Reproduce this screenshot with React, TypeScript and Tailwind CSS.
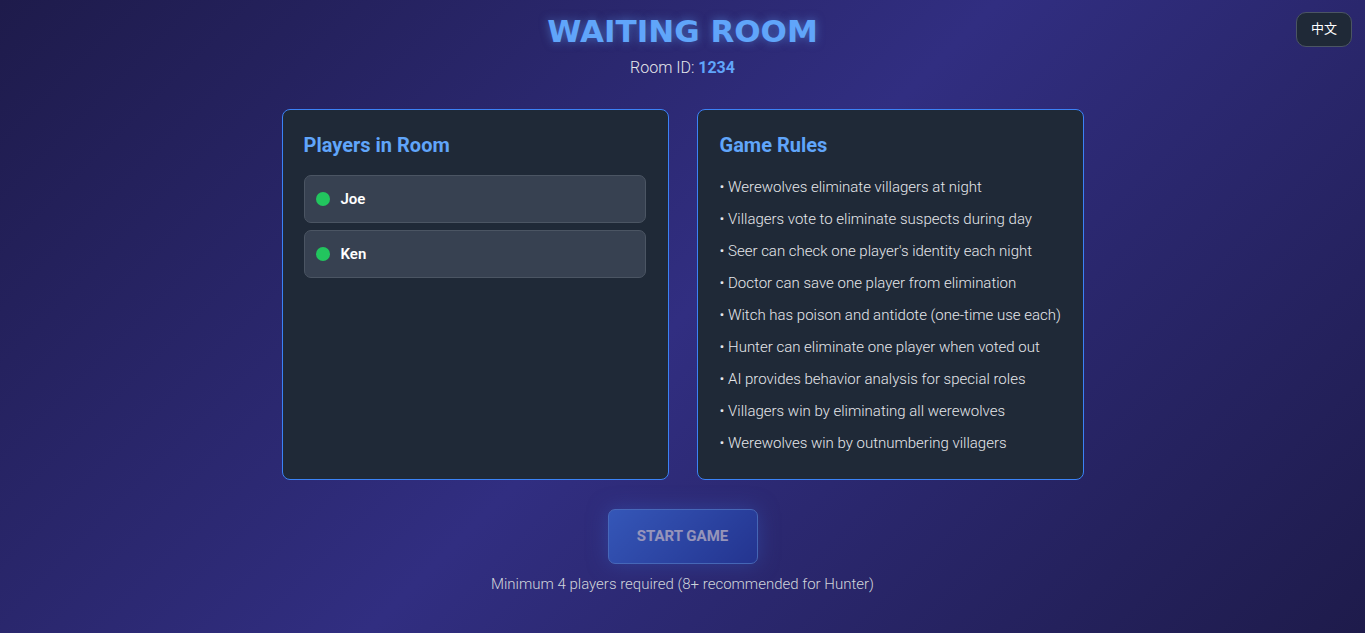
const players = ["Joe", "Ken"];

const rules = [
  "Werewolves eliminate villagers at night",
  "Villagers vote to eliminate suspects during day",
  "Seer can check one player's identity each night",
  "Doctor can save one player from elimination",
  "Witch has poison and antidote (one-time use each)",
  "Hunter can eliminate one player when voted out",
  "AI provides behavior analysis for special roles",
  "Villagers win by eliminating all werewolves",
  "Werewolves win by outnumbering villagers",
];

function PlayerRow({ name }: { name: string }) {
  return (
    <li className="flex h-12 items-center gap-[11px] rounded-[7px] border border-[#4b5563] bg-[#374151] px-[11px]">
      <span className="size-[14px] rounded-full bg-[#22c55e]" />
      <span className="text-[15px] leading-6 font-semibold text-white">{name}</span>
    </li>
  );
}

export default function App() {
  return (
    <div className="relative min-h-screen bg-[linear-gradient(135deg,#1e1b4b_0%,#312e81_50%,#1e1b4b_100%)] px-4 pt-[11px] pb-7 font-['Roboto','Noto_Sans_CJK_SC',sans-serif] text-[#e5e7eb]">
      <button
        type="button"
        className="absolute top-3 right-[13px] h-[35px] w-14 cursor-pointer rounded-[10px] border border-[#4b5563] bg-[#1f2937] pb-[2px] text-[13px] font-normal text-white"
      >
        中文
      </button>

      <header className="text-center">
        <h1 className="font-['DejaVu_Sans',sans-serif] text-[31px] leading-10 font-bold text-[#60a5fa] [text-shadow:0_0_10px_rgba(96,165,250,0.5)]">
          WAITING ROOM
        </h1>
        <p className="mt-[5px] text-base leading-6 font-light">
          Room ID: <span className="font-bold text-[#60a5fa]">1234</span>
        </p>
      </header>

      <main className="mx-auto mt-[29px] max-w-[802px]">
        <div className="grid gap-7 md:grid-cols-2">
          <section className="rounded-[8px] border border-[#3b82f6] bg-[#1f2937] pt-[21px] pr-[22px] pb-6 pl-[21px]">
            <h2 className="mb-4 text-xl leading-7 font-bold text-[#60a5fa]">Players in Room</h2>
            <ul className="flex flex-col gap-[7px]">
              {players.map((name) => (
                <PlayerRow key={name} name={name} />
              ))}
            </ul>
          </section>

          <section className="rounded-[8px] border border-[#3b82f6] bg-[#1f2937] pt-[21px] pr-4 pb-6 pl-[22px]">
            <h2 className="mb-4 text-xl leading-7 font-bold text-[#60a5fa]">Game Rules</h2>
            <ul className="flex flex-col gap-2 text-[15px] leading-6 font-light">
              {rules.map((rule) => (
                <li key={rule}>• {rule}</li>
              ))}
            </ul>
          </section>
        </div>

        <div className="mt-[29px] text-center">
          <button
            type="button"
            disabled
            className="h-[55px] w-[150px] rounded-[7px] border border-[#60a5fa] bg-[linear-gradient(135deg,#3b82f6,#1e40af)] text-[15px] font-bold text-white opacity-50 shadow-[0_0_20px_rgba(59,130,246,0.5)]"
          >
            START GAME
          </button>
          <p className="mt-2 text-[15px] leading-6 font-light text-[#d1d5db]">
            Minimum 4 players required (8+ recommended for Hunter)
          </p>
        </div>
      </main>
    </div>
  );
}
